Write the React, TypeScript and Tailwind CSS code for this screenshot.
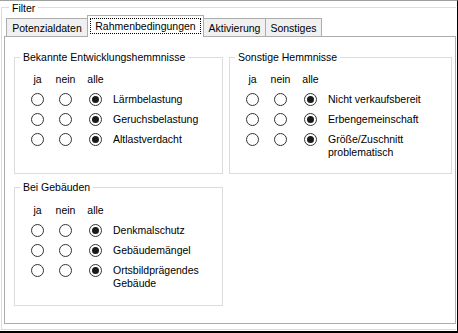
import React from "react";

type Row = { label: React.ReactNode };

const Radio = ({ checked }: { checked?: boolean }) => (
  <span className="flex h-[13px] w-[13px] shrink-0 items-center justify-center rounded-full border border-[#333333] bg-white">
    {checked && <span className="h-[7px] w-[7px] rounded-full bg-[#1a1a1a]" />}
  </span>
);

function Group({
  title,
  rows,
  width,
  height,
  padTop,
}: {
  title: string;
  rows: Row[];
  width: string;
  height: string;
  padTop: string;
}) {
  return (
    <fieldset className={`border border-[#dcdcdc] ${width} ${height}`}>
      <legend className="ml-[5px] px-[3px] leading-[13px] whitespace-nowrap">{title}</legend>
      <div className={`pl-[16px] ${padTop}`}>
        {/* column headers */}
        <div className="flex leading-[13px]">
          <div className="flex w-[13px] justify-center whitespace-nowrap">ja</div>
          <div className="ml-[15px] flex w-[13px] justify-center whitespace-nowrap">nein</div>
          <div className="ml-[17px] flex w-[13px] justify-center whitespace-nowrap">alle</div>
        </div>
        <div className="mt-[7px] flex flex-col gap-[7px]">
          {rows.map((r, i) => (
            <div key={i} className="flex items-start">
              <Radio />
              <span className="ml-[15px]">
                <Radio />
              </span>
              <span className="ml-[17px]">
                <Radio checked />
              </span>
              <span className="ml-[11px] leading-[13px] whitespace-nowrap">{r.label}</span>
            </div>
          ))}
        </div>
      </div>
    </fieldset>
  );
}

export default function App() {
  return (
    <div className="h-[333px] w-[458px] overflow-hidden border-t border-r border-b-2 border-t-[#a0a0a0] border-r-black border-b-black bg-white font-['Liberation_Sans',Arial,sans-serif] text-[10.5px] leading-[13px] text-black">
      <fieldset className="ml-px h-[329px] w-[455px] border-t border-b border-l border-[#dcdcdc] pl-[2px]">
        <legend className="ml-[5px] px-[3px] pt-[2px] leading-[11px]">Filter</legend>

        {/* Tab strip */}
        <div className="mt-px flex h-[21px] items-end pl-[2px]">
          <div className="h-[18px] w-[81px] border-t border-l border-[#adadad] bg-[#f0f0f0] pt-[3px] text-center whitespace-nowrap">
            Potenzialdaten
          </div>
          <div className="relative z-10 -mb-px h-[22px] w-[117px] border-t border-r border-l border-[#adadad] bg-white">
            <div className="mx-[2px] mt-[2px] h-[16px] border border-dotted border-black pt-px text-center whitespace-nowrap">
              Rahmenbedingungen
            </div>
          </div>
          <div className="h-[18px] w-[62px] border-t border-r border-[#adadad] bg-[#f0f0f0] pt-[3px] text-center whitespace-nowrap">
            Aktivierung
          </div>
          <div className="h-[18px] w-[56px] border-t border-r border-[#adadad] bg-[#f0f0f0] pt-[3px] text-center whitespace-nowrap">
            Sonstiges
          </div>
        </div>

        {/* Tab panel */}
        <div className="h-[288px] w-[452px] border border-[#adadad] bg-white pt-[14px] pl-[9px]">
          <div className="flex gap-[6px]">
            <Group
              title="Bekannte Entwicklungshemmnisse"
              width="w-[209px]"
              height="h-[123px]"
              padTop="pt-[9px]"
              rows={[{ label: "Lärmbelastung" }, { label: "Geruchsbelastung" }, { label: "Altlastverdacht" }]}
            />
            <Group
              title="Sonstige Hemmnisse"
              width="w-[223px]"
              height="h-[123px]"
              padTop="pt-[9px]"
              rows={[
                { label: "Nicht verkaufsbereit" },
                { label: "Erbengemeinschaft" },
                {
                  label: (
                    <>
                      Größe/Zuschnitt
                      <br />
                      problematisch
                    </>
                  ),
                },
              ]}
            />
          </div>
          <div className="mt-[7px]">
            <Group
              title="Bei Gebäuden"
              width="w-[209px]"
              height="h-[125px]"
              padTop="pt-[10px]"
              rows={[
                { label: "Denkmalschutz" },
                { label: "Gebäudemängel" },
                {
                  label: (
                    <>
                      Ortsbildprägendes
                      <br />
                      Gebäude
                    </>
                  ),
                },
              ]}
            />
          </div>
        </div>
      </fieldset>
    </div>
  );
}
